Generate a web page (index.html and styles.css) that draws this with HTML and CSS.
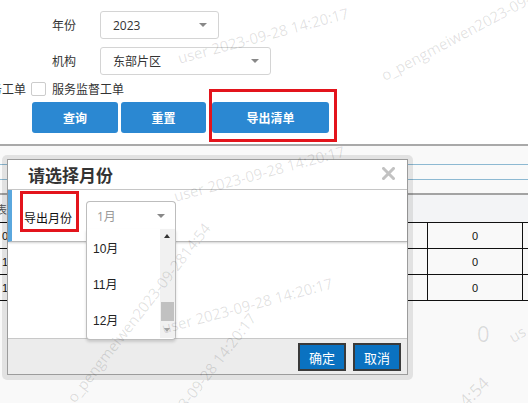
FILE: index.html
```html
<!DOCTYPE html>
<html lang="zh">
<head>
<meta charset="utf-8">
<title>导出月份</title>
<link rel="stylesheet" href="styles.css">
</head>
<body>
<div class="page">
  <section class="top">
    <div class="field">
      <span class="flabel">年份</span>
      <div class="sel sel-year"><span>2023</span><i class="caret"></i></div>
    </div>
    <div class="field field-2">
      <span class="flabel">机构</span>
      <div class="sel sel-org"><span>东部片区</span><i class="caret"></i></div>
    </div>
    <div class="checks">
      <span class="cut">服务工单</span>
      <span class="box"></span>
      <span>服务监督工单</span>
    </div>
    <div class="btns">
      <button class="btn b-query">查询</button>
      <button class="btn b-reset">重置</button>
      <button class="btn b-export">导出清单</button>
    </div>
    <div class="mark mark-top"></div>
  </section>

  <section class="lower">
    <div class="bline first"></div>
    <div class="bline second"></div>
    <div class="gline"></div>
    <div class="band"><span class="hcell">表</span></div>
    <div class="tbl">
      <div class="tr"><div class="td c1">0</div><div class="td c2">0</div><div class="td c3"></div></div>
      <div class="tr"><div class="td c1">1</div><div class="td c2">0</div><div class="td c3"></div></div>
      <div class="tr"><div class="td c1">1</div><div class="td c2">0</div><div class="td c3"></div></div>
    </div>
  </section>

  <div class="dialog">
    <div class="dlg-inner">
      <div class="dlg-head">
        <span class="dlg-title">请选择月份</span>
        <svg class="close" width="13" height="13" viewBox="0 0 13 13"><path d="M1.5 1.5 L11.5 11.5 M11.5 1.5 L1.5 11.5" stroke="#c2c2c2" stroke-width="3" stroke-linecap="square"/></svg>
      </div>
      <div class="dlg-body">
        <span class="mlabel">导出月份</span>
        <div class="msel">
          <span class="msel-val">1月</span><i class="caret"></i>
          <div class="dropdown">
            <ul class="opts">
              <li>10月</li>
              <li>11月</li>
              <li>12月</li>
            </ul>
            <div class="sbar">
              <i class="up"></i>
              <div class="thumb"></div>
              <i class="down"></i>
            </div>
          </div>
        </div>
        <div class="mark mark-label"></div>
      </div>
      <div class="dlg-space"></div>
      <div class="dlg-foot">
        <button class="fbtn">确定</button>
        <button class="fbtn">取消</button>
      </div>
    </div>
  </div>

  <div class="wm">
    <span class="w w1">user 2023-09-28 14:20:17</span>
    <span class="w w2">user 2023-09-28 14:20:17</span>
    <span class="w w3">user 2023-09-28 14:20:17</span>
    <span class="w w4">o_pengmeiwen2023-09-2814:54</span>
    <span class="w w5">o_pengmeiwen2023-09-2814:54</span>
    <span class="w w6">o_pengmeiwen2023-09-28 14:54</span>
    <span class="w w7">o_pengmeiwen2023-09-28 14:20:17</span>
    <span class="w w8">0</span>
    <span class="w w9">4:54</span>
    <span class="w w10">us</span>
  </div>
</div>
</body>
</html>
```

FILE: styles.css
```css
* { box-sizing: border-box; margin: 0; padding: 0; }
html, body { width: 528px; height: 403px; overflow: hidden; }
body {
  background: #f9f9f9;
  font-family: "Open Sans", "Noto Sans CJK SC", sans-serif;
  font-size: 12px;
  color: #333;
}
.page { position: relative; width: 528px; height: 403px; overflow: hidden; }

/* top filter area */
.top {
  position: relative;
  height: 146px;
  background: #fff;
  border-bottom: 2px solid #a9a9a9;
  padding-top: 11px;
}
.field { display: flex; align-items: center; padding-left: 52px; height: 28px; }
.field-2 { margin-top: 8px; }
.flabel { width: 48px; color: #333; }
.sel {
  position: relative;
  height: 28px;
  border: 1px solid #d4d4d4;
  border-radius: 3px;
  display: flex;
  align-items: center;
  padding-left: 12px;
  color: #333;
}
.sel-year { width: 119px; }
.sel-org { width: 171px; }
.caret {
  position: absolute;
  top: 11px;
  width: 0; height: 0;
  border-left: 4px solid transparent;
  border-right: 4px solid transparent;
  border-top: 4px solid #888;
}
.sel-year .caret { right: 11px; }
.sel-org .caret { right: 11px; }

.checks {
  display: flex;
  align-items: center;
  height: 16px;
  margin-top: 6px;
  margin-left: -22px;
  color: #333;
}
.box {
  width: 15px; height: 14px;
  border: 1px solid #ccc;
  border-radius: 2px;
  margin: 0 6px 0 5px;
  background: #fff;
}
.btns { display: flex; padding-left: 32px; margin-top: 5px; }
.btn {
  height: 31px;
  border: none;
  border-radius: 3px;
  background: #2b88d2;
  color: #fff;
  font-family: "Noto Sans CJK SC", sans-serif;
  font-weight: bold;
  font-size: 12px;
}
.b-query { width: 86px; }
.b-reset { width: 85px; margin-left: 3px; }
.b-export { width: 117px; margin-left: 6px; }
.mark {
  position: absolute;
  border: 3px solid #e3141c;
}
.mark-top { left: 209px; top: 89px; width: 128px; height: 53px; }

/* lower area */
.lower { background: #f9f9f9; }
.bline { height: 1px; background: #8db9d2; }
.bline.first { margin-top: 18px; }
.bline.second { margin-top: 14px; }
.gline { height: 2px; background: #a3a3a3; margin-top: 13px; }
.band {
  height: 27px;
  background: #f3f4f6;
  display: flex;
  align-items: center;
  font-size: 11px;
  color: #555;
}
.hcell { margin-left: -4px; }
.tbl { border-top: 1px solid #111; }
.tr { display: flex; height: 26px; border-bottom: 1px solid #111; }
.td { display: flex; align-items: center; font-size: 11px; color: #111; font-family: "Liberation Sans", sans-serif; }
.c1 { width: 427px; padding-left: 2px; }
.c2 { width: 95px; border-left: 1px solid #111; justify-content: center; }
.c3 { flex: 1; border-left: 1px solid #111; }

/* dialog */
.dialog {
  position: absolute;
  left: 2px; top: 155px;
  width: 411px; height: 225px;
  background: rgba(0,0,0,0.09);
  border-radius: 5px;
  padding: 4px 5px 5px 5px;
}
.dlg-inner {
  height: 100%;
  border: 1px solid #9c9c9c;
  background: #fff;
  display: flex;
  flex-direction: column;
}
.dlg-head {
  height: 30px;
  border-bottom: 1px solid #c9c9c9;
  display: flex;
  align-items: center;
  justify-content: space-between;
  padding: 0 12px 0 20px;
}
.dlg-title {
  font-family: "Noto Sans CJK SC", sans-serif;
  font-weight: bold;
  font-size: 17px;
  color: #333;
}
.close { margin-top: -3px; }
.dlg-body {
  position: relative;
  height: 52px;
  border-left: 4px solid #5aa7de;
  border-bottom: 1px solid #b9b9b9;
  box-shadow: 0 1px 2px rgba(0,0,0,0.18);
  display: flex;
  align-items: flex-start;
  padding: 11px 0 0 12px;
  z-index: 2;
}
.mlabel {
  width: 48px;
  margin-top: 8px;
  font-family: "Noto Sans CJK SC", sans-serif;
  color: #111;
}
.mark-label { left: 8px; top: 1px; width: 59px; height: 41px; }
.msel {
  position: relative;
  width: 90px;
  height: 28px;
  margin-left: 14px;
  border: 1px solid #bdbdbd;
  border-bottom: none;
  border-radius: 4px 4px 0 0;
  background: #fff;
  display: flex;
  align-items: center;
  padding-left: 10px;
}
.msel-val { color: #999; }
.msel .caret { right: 10px; top: 12px; }
.dropdown {
  position: absolute;
  left: -1px; top: 27px;
  width: 90px; height: 111px;
  border: 1px solid #bdbdbd;
  border-top: none;
  border-radius: 0 0 4px 4px;
  background: #fff;
  box-shadow: 0 2px 3px rgba(0,0,0,0.15);
  display: flex;
}
.opts { list-style: none; flex: 1; }
.opts li {
  height: 36px;
  display: flex;
  align-items: center;
  padding-left: 6px;
  color: #222;
  font-family: "Liberation Sans", "Noto Sans CJK SC", sans-serif;
  font-size: 12px;
}
.sbar {
  position: relative;
  width: 15px;
  background: #f1f1f1;
  margin-bottom: 1px;
}
.up {
  position: absolute; left: 4px; top: 5px;
  width: 0; height: 0;
  border-left: 3.5px solid transparent;
  border-right: 3.5px solid transparent;
  border-bottom: 4px solid #333;
}
.thumb {
  position: absolute; left: 1px; top: 73px;
  width: 13px; height: 19px;
  background: #c1c1c1;
}
.down {
  position: absolute; left: 4px; bottom: 6px;
  width: 0; height: 0;
  border-left: 3.5px solid transparent;
  border-right: 3.5px solid transparent;
  border-top: 4px solid #a3a3a3;
}
.dlg-space { flex: 1; background: #fff; }
.dlg-foot {
  height: 36px;
  border-top: 1px solid #c8c8c8;
  background: #ececec;
  display: flex;
  justify-content: flex-end;
  align-items: flex-start;
  gap: 7px;
  padding: 4px 6px 0 0;
}
.fbtn {
  width: 48px; height: 28px;
  background: #0a72c1;
  border: 2px solid #3a3a3a;
  color: #fff;
  font-family: "Noto Sans CJK SC", sans-serif;
  font-size: 13px;
}

/* watermark layer */
.wm { position: absolute; inset: 0; pointer-events: none; z-index: 5; }
.w {
  position: absolute;
  white-space: nowrap;
  font-family: "Open Sans", sans-serif;
  font-size: 15px;
  color: rgba(0,0,0,0.12);
  transform-origin: 0 50%;
}
.w1 { left: 178px; top: 48px; transform: rotate(-15deg); }
.w2 { left: 174px; top: 186px; transform: rotate(-15deg); }
.w3 { left: 162px; top: 318px; transform: rotate(-15deg); }
.w4 { left: -150px; top: 200px; transform: rotate(-52deg); }
.w5 { left: 70px; top: 390px; transform: rotate(-52deg); }
.w6 { left: 382px; top: 66px; transform: rotate(-28deg); }
.w7 { left: 100px; top: 500px; transform: rotate(-52deg); }
.w8 { left: 477px; top: 318px; font-size: 22px; }
.w9 { left: 462px; top: 392px; transform: rotate(-45deg); font-size: 17px; }
.w10 { left: 510px; top: 328px; transform: rotate(-30deg); }
```
